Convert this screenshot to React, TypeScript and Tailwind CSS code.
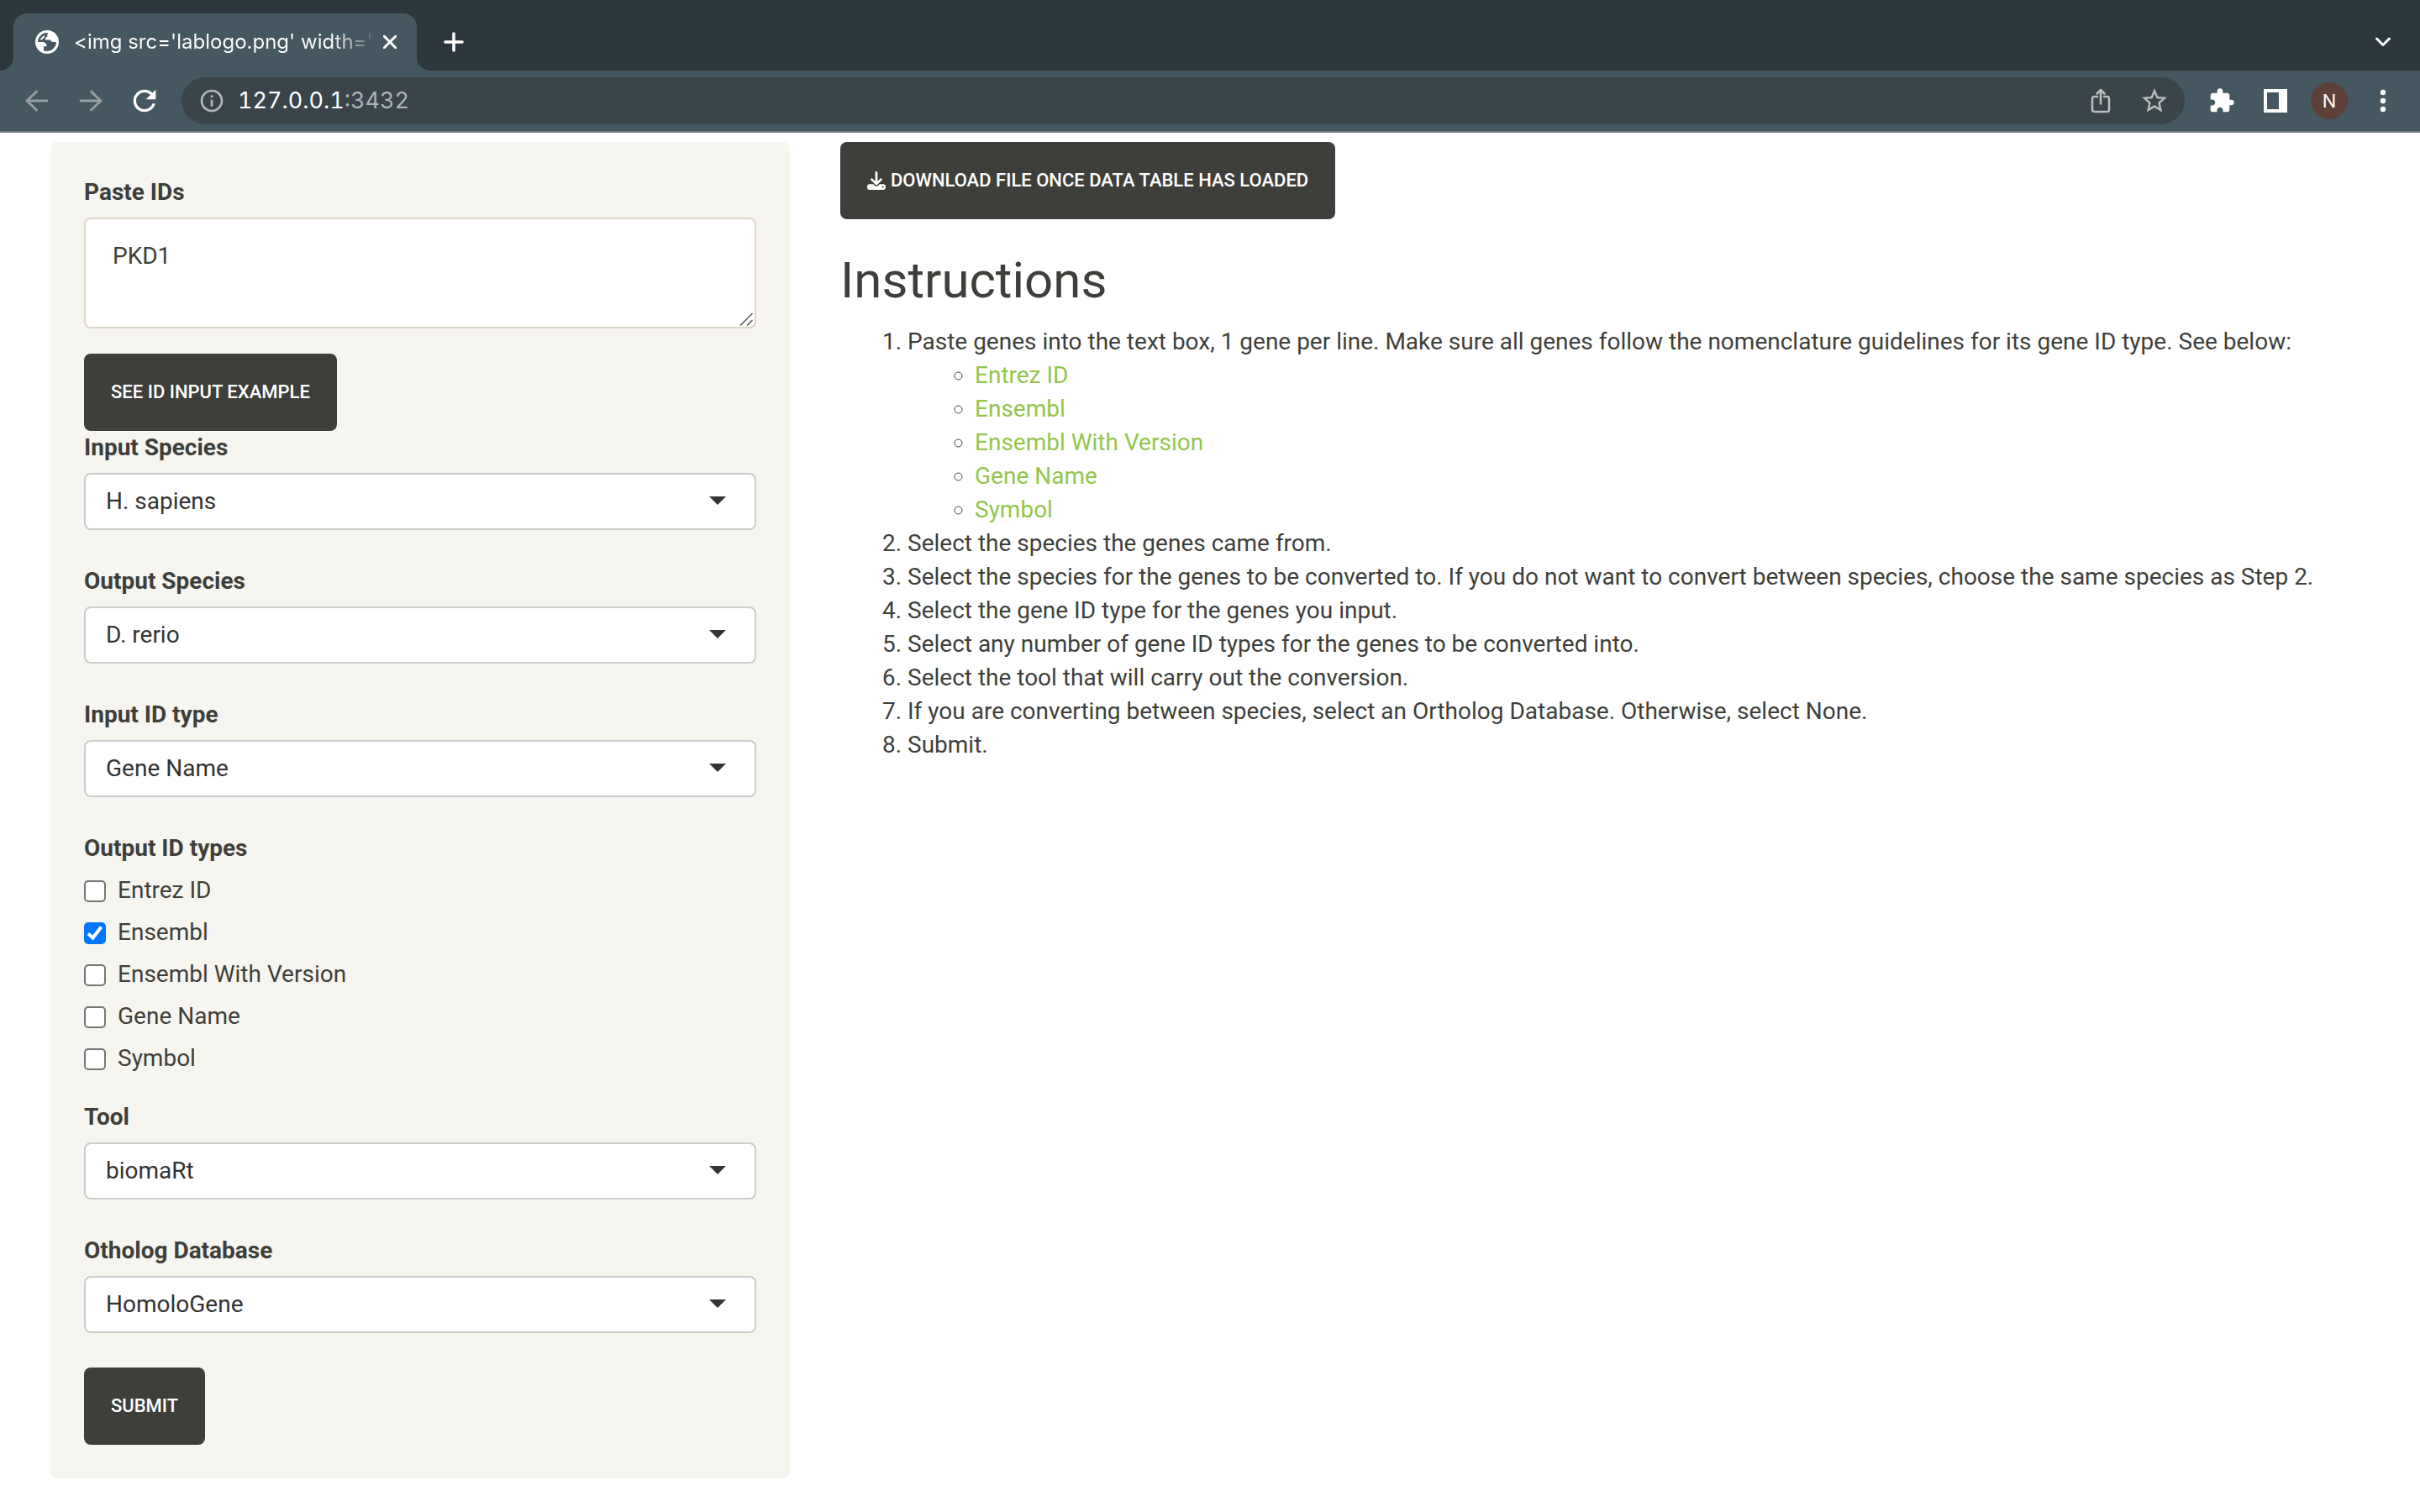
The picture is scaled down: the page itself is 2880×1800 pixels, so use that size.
import { useState } from "react";
import { FaDownload } from "react-icons/fa6";
import { MdExtension, MdInfoOutline, MdRefresh, MdStarBorder } from "react-icons/md";

const ID_TYPES = ["Entrez ID", "Ensembl", "Ensembl With Version", "Gene Name", "Symbol"];
const SPECIES = ["H. sapiens", "D. rerio", "M. musculus"];

function GlobeIcon() {
  return (
    <svg viewBox="0 0 28 28" className="size-7 shrink-0" aria-hidden="true">
      <circle cx="14" cy="14" r="14" fill="#fff" />
      <path
        fill="#455760"
        d="M15.500 3.100C9 2.400 3.100 7.500 3.100 14H8.500C11.500 14 13.500 15.800 13.500 19.200H10V24.200C13.500 25.500 17.500 24.800 20.500 22.700C23.500 20.400 25 17.300 24.900 14H21.500C19.500 14 18.200 13.200 18 11.600H12V10C12 8.600 13 7.800 14.300 7.800V5.800C14.300 4.800 14.800 3.800 15.500 3.100Z"
      />
      <path fill="#fff" d="M12.500 5.800C9.300 6.500 6.800 8.600 6 11.600H8.200C8.200 10.300 9.200 9.400 10.300 9.400C10.300 7.700 11.300 6.500 12.500 5.800Z" />
    </svg>
  );
}

function TabFlare({ flip }: { flip?: boolean }) {
  return (
    <svg viewBox="0 0 16 16" className="size-4 shrink-0 self-end" aria-hidden="true">
      <path fill="#455760" d={flip ? "M0 0A16 16 0 0 0 16 16H0Z" : "M16 0A16 16 0 0 1 0 16H16Z"} />
    </svg>
  );
}

function ArrowIcon({ forward }: { forward?: boolean }) {
  return (
    <svg viewBox="0 0 28 28" className="size-7" fill="none" stroke="#949ea3" strokeWidth="3" strokeLinecap="round" strokeLinejoin="round" aria-hidden="true">
      <path d={forward ? "M2 14H26M14.500 3 26 14 14.500 25" : "M26 14H2M13.500 3 2 14 13.500 25"} />
    </svg>
  );
}

function BrowserChrome() {
  return (
    <header className="font-['Inter',sans-serif]">
      <div className="flex h-[84px] items-end bg-[#2b373d]">
        <TabFlare />
        <div className="flex h-[68px] w-[480px] items-center rounded-t-[16px] bg-[#455760] pr-5 pl-[26px]">
          <GlobeIcon />
          <div className="ml-[18px] bg-linear-to-r from-white from-86% to-white/10 bg-clip-text text-2xl whitespace-nowrap text-transparent">
            {"<img src='lablogo.png' width='"}
          </div>
          <button type="button" aria-label="Close tab" className="ml-auto grid size-6 place-items-center">
            <svg viewBox="0 0 16 16" className="size-4" stroke="#fff" strokeWidth="3" strokeLinecap="round" aria-hidden="true">
              <path d="M1 1 15 15M15 1 1 15" />
            </svg>
          </button>
        </div>
        <TabFlare flip />
        <button type="button" aria-label="New tab" className="ml-4 grid h-[68px] w-6 place-items-center">
          <svg viewBox="0 0 24 24" className="size-6" stroke="#fff" strokeWidth="3.600" strokeLinecap="round" aria-hidden="true">
            <path d="M12 2V22M2 12H22" />
          </svg>
        </button>
        <button type="button" aria-label="Search tabs" className="mr-8 ml-auto grid h-[68px] w-6 place-items-center">
          <svg viewBox="0 0 20 12" className="h-3 w-5" fill="none" stroke="#fff" strokeWidth="3" strokeLinecap="round" strokeLinejoin="round" aria-hidden="true">
            <path d="M2.500 2 10 9.500 17.500 2" />
          </svg>
        </button>
      </div>
      <div className="flex h-[74px] items-center border-b-2 border-[#717c80] bg-[#455760] pr-8 pl-[30px]">
        <button type="button" aria-label="Back"><ArrowIcon /></button>
        <button type="button" aria-label="Forward" className="ml-9"><ArrowIcon forward /></button>
        <button type="button" aria-label="Reload" className="ml-[30px]">
          <MdRefresh className="size-10 text-white" />
        </button>
        <div className="ml-6 flex h-14 flex-1 items-center rounded-full bg-[#39454a] pr-[18px] pl-5">
          <MdInfoOutline className="size-8 text-[#b2b7ba]" />
          <div className="ml-[15px] text-[27px] leading-8 text-white tabular-nums">
            127.0.0.1<span className="text-[#aeb3b5]">:3432</span>
          </div>
          <button type="button" aria-label="Share" className="ml-auto">
            <svg viewBox="0 0 24 30" className="h-[30px] w-6" fill="none" stroke="#bdbdbd" strokeWidth="2.600" strokeLinecap="round" strokeLinejoin="round" aria-hidden="true">
              <path d="M8 10H4.500A2.500 2.500 0 0 0 2 12.500V25.500A2.500 2.500 0 0 0 4.500 28H19.500A2.500 2.500 0 0 0 22 25.500V12.500A2.500 2.500 0 0 0 19.500 10H16M12 18.500V3M7.500 6.500 12 2 16.500 6.500" />
            </svg>
          </button>
          <button type="button" aria-label="Bookmark" className="ml-[34px]">
            <MdStarBorder className="size-9 text-[#bdbdbd]" />
          </button>
        </div>
        <button type="button" aria-label="Extensions" className="ml-7">
          <MdExtension className="size-8 text-white" />
        </button>
        <button type="button" aria-label="Side panel" className="ml-[34px]">
          <svg viewBox="0 0 28 28" className="size-7" aria-hidden="true">
            <path fill="#fff" fillRule="evenodd" d="M0 0H28V28H0ZM4 4V24H18V4Z" />
          </svg>
        </button>
        <button type="button" aria-label="Profile" className="ml-7 grid size-11 place-items-center rounded-full bg-[#5d4037] text-[22px] text-white">
          N
        </button>
        <button type="button" aria-label="Menu" className="ml-[30px]">
          <svg viewBox="0 0 24 28" className="h-7 w-6" fill="#fff" aria-hidden="true">
            <circle cx="12" cy="4" r="3.200" />
            <circle cx="12" cy="14" r="3.200" />
            <circle cx="12" cy="24" r="3.200" />
          </svg>
        </button>
      </div>
    </header>
  );
}

function SelectField({ id, label, options }: { id: string; label: string; options: string[] }) {
  return (
    <div className="mb-[41px]">
      <label htmlFor={id} className="mb-2.5 block font-bold">{label}</label>
      <div className="relative">
        <select
          id={id}
          className="block h-[68px] w-full appearance-none rounded-lg border-2 border-[#ccc] bg-white px-6 leading-10 text-[#333]"
        >
          {options.map((option) => (
            <option key={option}>{option}</option>
          ))}
        </select>
        <svg viewBox="0 0 20 10" className="pointer-events-none absolute top-7 right-9 h-2.5 w-5" aria-hidden="true">
          <path fill="#333" d="M0 0H20L10 10Z" />
        </svg>
      </div>
    </div>
  );
}

function CheckboxRow({ label, initial }: { label: string; initial: boolean }) {
  const [checked, setChecked] = useState(initial);
  return (
    <label className="mb-2.5 flex items-center">
      <span className="mt-0.5 mr-3.5 grid">
        <input
          type="checkbox"
          checked={checked}
          onChange={(event) => setChecked(event.target.checked)}
          className="col-start-1 row-start-1 size-[26px] appearance-none rounded-[5px] border-2 border-[#767676] bg-white checked:border-[#0075ff] checked:bg-[#0075ff]"
        />
        {checked && (
          <svg viewBox="0 0 26 26" className="pointer-events-none col-start-1 row-start-1 size-[26px]" fill="none" stroke="#fff" strokeWidth="4" aria-hidden="true">
            <path d="M5 13.500 10.500 18.500 20.500 5.500" />
          </svg>
        )}
      </span>
      {label}
    </label>
  );
}

const BUTTON =
  "inline-flex items-center rounded-lg bg-[#3e3f3a] px-8 py-[26px] text-[22px] leading-10 font-medium text-white uppercase";

function Sidebar() {
  return (
    <form className="rounded-lg bg-[#f6f5f0] p-10" onSubmit={(event) => event.preventDefault()}>
      <label htmlFor="ids" className="mb-2.5 block font-bold">Paste IDs</label>
      <div className="relative mb-[30px]">
        <textarea
          id="ids"
          rows={2}
          defaultValue="PKD1"
          className="block w-full resize-none rounded-lg border-2 border-[#dfd7ca] bg-white px-8 py-6 leading-10"
        />
        <svg viewBox="0 0 16 16" className="pointer-events-none absolute right-1 bottom-[3px] size-4" stroke="#555" strokeWidth="1.500" aria-hidden="true">
          <path d="M1 15.500 15.500 1M9 15.500 15.500 9" />
        </svg>
      </div>
      <button type="button" className={BUTTON}>See ID input example</button>
      <SelectField id="input-species" label="Input Species" options={SPECIES} />
      <SelectField id="output-species" label="Output Species" options={["D. rerio", "H. sapiens", "M. musculus"]} />
      <SelectField id="input-type" label="Input ID type" options={["Gene Name", "Entrez ID", "Ensembl", "Symbol"]} />
      <fieldset className="mb-5">
        <legend className="mb-2.5 font-bold">Output ID types</legend>
        {ID_TYPES.map((type) => (
          <CheckboxRow key={type} label={type} initial={type === "Ensembl"} />
        ))}
      </fieldset>
      <SelectField id="tool" label="Tool" options={["biomaRt", "AnnotationDbi"]} />
      <SelectField id="database" label="Otholog Database" options={["HomoloGene", "None"]} />
      <button type="submit" className={BUTTON}>Submit</button>
    </form>
  );
}

function Instructions() {
  return (
    <main>
      <button type="button" className={BUTTON}>
        <FaDownload className="mr-1.5 size-[22px]" />
        Download file once data table has loaded
      </button>
      <h2 className="mt-10 mb-5 text-[60px] leading-[66px]">Instructions</h2>
      <ol className="list-decimal pl-20">
        <li>
          Paste genes into the text box, 1 gene per line. Make sure all genes follow the nomenclature guidelines for
          its gene ID type. See below:
          <ul className="list-[circle] pl-20">
            {ID_TYPES.map((type) => (
              <li key={type}>
                <a href="#" className="text-[#93c54b]">{type}</a>
              </li>
            ))}
          </ul>
        </li>
        <li>Select the species the genes came from.</li>
        <li>
          Select the species for the genes to be converted to. If you do not want to convert between species, choose
          the same species as Step 2.
        </li>
        <li>Select the gene ID type for the genes you input.</li>
        <li>Select any number of gene ID types for the genes to be converted into.</li>
        <li>Select the tool that will carry out the conversion.</li>
        <li>If you are converting between species, select an Ortholog Database. Otherwise, select None.</li>
        <li>Submit.</li>
      </ol>
    </main>
  );
}

export default function App() {
  return (
    <div className="min-h-screen bg-white">
      <BrowserChrome />
      <div className="grid grid-cols-3 gap-[60px] px-[60px] pt-[11px] pb-10 font-['Roboto',sans-serif] text-[28px] leading-10 text-[#3e3f3a]">
        <div>
          <Sidebar />
        </div>
        <div className="col-span-2">
          <Instructions />
        </div>
      </div>
    </div>
  );
}
